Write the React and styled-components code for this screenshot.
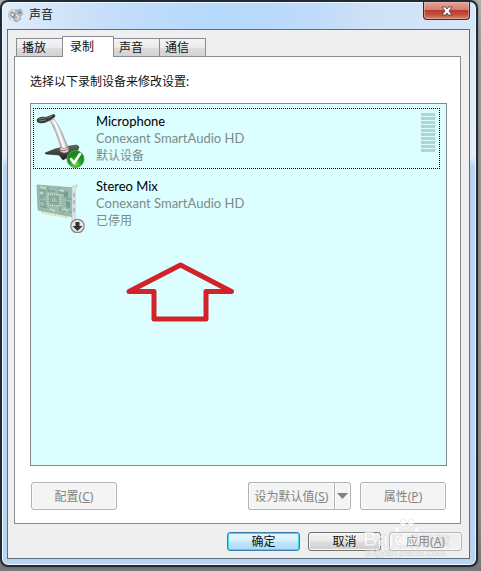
import React, { useState } from "react";
import styled, { createGlobalStyle, css } from "styled-components";

const GlobalStyle = createGlobalStyle`
  * { box-sizing: border-box; }
  body {
    margin: 0;
    background: linear-gradient(#b0b0b0, #969696 10%, #8c8c8c 90%, #777778);
    font-family: "Noto Sans", "Noto Sans CJK SC", sans-serif;
    font-size: 12px;
    line-height: 17px;
    color: #111;
  }
  button { font: inherit; color: inherit; margin: 0; padding: 0; }
`;

const Dialog = styled.main`
  display: flex;
  flex-direction: column;
  min-height: calc(100vh - 4px);
  margin: 0 3px 4px 0;
  padding: 0 6px 6px 5px;
  border: 2px solid #202c35;
  border-radius: 8px;
  background:
    linear-gradient(90deg, #e0edf9 0, #c5defa 22%, #b5d9fd 45%, #bedbfb 65%, #cfe1f6 78%, #d6e7f9 100%) top / 100% 28px no-repeat,
    linear-gradient(#dceaf8 0, #e4edf6 155px, #b9d3f0 165px, #b9d3f0 100%);
  box-shadow: inset 0 0 0 1px #edf7ff, 0 0 2px #555;
`;

const TitleBar = styled.header`
  display: flex;
  align-items: flex-start;
  height: 27px;
  flex: none;
`;

const Title = styled.h1`
  display: flex;
  align-items: center;
  gap: 5px;
  flex: 1;
  margin: 0;
  padding: 0 0 0 1px;
  height: 25px;
  font-size: 12px;
  font-weight: 400;
`;

const CloseButton = styled.button`
  display: grid;
  place-items: center;
  width: 47px;
  height: 18px;
  border: 1px solid #4f2326;
  border-top: 0;
  border-radius: 0 0 4px 4px;
  background: linear-gradient(#e3a79b 0, #d28072 45%, #b93b2b 50%, #c5503c 75%, #dc8a72);
  box-shadow: inset 0 0 0 1px #f0beb380;
`;

const Client = styled.div`
  display: flex;
  flex-direction: column;
  flex: 1;
  padding: 6px 7px 7px 6px;
  border: 1px solid #5c6e7e;
  background: #efefef;
`;

const TabList = styled.div`
  display: flex;
  align-items: flex-end;
  padding-left: 2px;
  height: 20px;
`;

const Tab = styled.button`
  height: 18px;
  width: 47px;
  padding: 1px 0 0 5px;
  text-align: left;
  line-height: 16px;
  border: 1px solid #898c95;
  border-bottom: 0;
  background: linear-gradient(#f4f4f4, #ebebeb 50%, #dcdcdc 55%, #d2d2d2);
  & + & { margin-left: -1px; }
  ${(p) => p.$active && css`
    position: relative;
    z-index: 1;
    width: 52px;
    height: 21px;
    margin-bottom: -1px;
    padding: 0 0 1px 7px;
    background: #fff;
  `}
`;

const Page = styled.section`
  display: flex;
  flex-direction: column;
  flex: 1;
  margin-right: 1px;
  padding: 16px 13px 13px 15px;
  border: 1px solid #898c95;
  background: #fff;
`;

const Prompt = styled.p`
  margin: 0 0 12px;
  line-height: 18px;
`;

const DeviceArea = styled.div`
  position: relative;
  flex: 1;
  padding: 4px 6px 4px 2px;
  border: 1px solid #828790;
  background: #dcfefe;
`;

const Devices = styled.ul`
  display: grid;
  gap: 4px;
  margin: 0;
  padding: 0;
  list-style: none;
`;

const Device = styled.li`
  display: flex;
  min-height: 61px;
  padding: 4px 4px 0 2px;
  border: 1px dotted ${(p) => (p.$selected ? "#000" : "transparent")};
`;

const DeviceIcon = styled.svg`
  flex: none;
  width: 50px;
  height: 55px;
  margin-right: 10px;
`;

const DeviceText = styled.div`
  flex: 1;
  color: #7d8b8b;
`;

const DeviceName = styled.div`
  font-family: Lato, "Noto Sans CJK SC", sans-serif;
  font-size: 13px;
  color: #000;
`;

const DeviceMaker = styled.div`
  font-family: Lato, "Noto Sans CJK SC", sans-serif;
  font-size: 13px;
`;

const Meter = styled.div`
  display: grid;
  align-content: start;
  gap: 1px;
  width: 14px;
`;

const MeterBar = styled.span`
  height: 3px;
  background: #a9d6d9;
`;

const ArrowMark = styled.svg`
  position: absolute;
  left: 94px;
  top: 157px;
  width: 112px;
  height: 64px;
`;

const Actions = styled.div`
  display: flex;
  gap: 9px;
  margin: 16px 1px 0 1px;
`;

const ActionButton = styled.button`
  display: flex;
  align-items: center;
  justify-content: center;
  width: 86px;
  height: 28px;
  border: 1px solid #adb2b5;
  border-radius: 3px;
  background: #f4f4f4;
  color: #838383;
  box-shadow: inset 0 0 0 1px #fcfcfc;
  ${(p) => p.$first && css`margin-right: auto;`}
  ${(p) => p.$split && css`
    border-right: 0;
    border-radius: 3px 0 0 3px;
  `}
  ${(p) => p.$drop && css`
    width: 17px;
    border-radius: 0 3px 3px 0;
  `}
`;

const SplitButton = styled.div`
  display: flex;
`;

const Footer = styled.footer`
  position: relative;
  display: flex;
  justify-content: flex-end;
  gap: 8px;
  margin-top: 8px;
`;

const FooterButton = styled.button`
  width: 73px;
  height: 19px;
  line-height: 17px;
  border: 1px solid #707070;
  border-radius: 3px;
  background: linear-gradient(#f3f3f3, #ebebeb 48%, #dddddd 52%, #cfcfcf);
  box-shadow: inset 0 0 0 1px #fafafa;
  ${(p) => p.$primary && css`
    border-color: #3c7fb1;
    background: linear-gradient(#e8f6fd, #d6effb 48%, #bee6f9 52%, #a9dbf3);
    box-shadow: inset 0 0 0 1px #48d2f2;
  `}
  &:disabled {
    position: relative;
    z-index: 1;
    border-color: #b3b7ba;
    background: transparent;
    color: #8b8b8b;
  }
`;

const Watermark = styled.svg`
  position: absolute;
  right: 7px;
  top: -16px;
  width: 92px;
  height: 46px;
  pointer-events: none;
  font-family: "Liberation Sans", "Noto Sans CJK SC", sans-serif;
`;

const DEVICES = [
  { name: "Microphone", maker: "Conexant SmartAudio HD", status: "默认设备", icon: "mic" },
  { name: "Stereo Mix", maker: "Conexant SmartAudio HD", status: "已停用", icon: "card" },
];

function SpeakerIcon() {
  return (
    <svg width="16" height="16" viewBox="0 0 16 16" aria-hidden="true">
      <circle cx="6" cy="8" r="6" fill="#b3babd" />
      <path d="M1 6 6 2l3 4-2 7-4 1Z" fill="#e1e5e7" />
      <ellipse cx="5" cy="8" rx="2.6" ry="3.6" fill="#8b9498" transform="rotate(-25 5 8)" />
      <ellipse cx="4.5" cy="7.5" rx="1.2" ry="1.8" fill="#dfe3e5" />
      <path d="m8 3 5-1 2 5-3 3 1 2-4 3-3-1 1-5Z" fill="#b3babd" stroke="#9aa2a6" strokeWidth=".6" />
      <circle cx="11.500" cy="5.500" r="1.500" fill="#858d91" />
      <path d="m8 8 3 2-2 3" fill="none" stroke="#f3f5f6" />
    </svg>
  );
}

function MicIcon() {
  return (
    <DeviceIcon viewBox="0 0 50 55" aria-hidden="true">
      <defs>
        <linearGradient id="arm" gradientUnits="userSpaceOnUse" x1="17" y1="24" x2="28" y2="20">
          <stop stopColor="#8a8a8a" /><stop offset=".35" stopColor="#d8d8d8" /><stop offset=".6" stopColor="#fff" /><stop offset="1" stopColor="#8a8a8a" />
        </linearGradient>
        <linearGradient id="base" x2="0" y2="1"><stop stopColor="#6a6a6a" /><stop offset="1" stopColor="#1a1a1a" /></linearGradient>
        <radialGradient id="ok" cy=".8"><stop stopColor="#7ce048" /><stop offset=".6" stopColor="#2aa528" /><stop offset="1" stopColor="#1a8a1d" /></radialGradient>
      </defs>
      <path d="m9 40 10-4 9-2 13-2 2 2-3 7-4 1-9 5-4-5-13-1Z" fill="url(#base)" stroke="#2a2a2a" strokeWidth=".6" />
      <path d="m14 7 4-1q5 7 8 14l6 14q-3 4-7 1l-5-15Z" fill="url(#arm)" stroke="#8d8d8d" strokeWidth=".6" />
      <path d="m17 11 4 9 5 14" fill="none" stroke="#999" strokeWidth=".6" />
      <path d="M24 34q4 3 8 0l1 4q-5 4-9 0Z" fill="#d8d8d8" stroke="#777" strokeWidth=".6" />
      <path d="M24 37q4 2 8-1" fill="none" stroke="#b04a4a" strokeWidth=".8" />
      <path d="M1 6Q4 3 10 4l8-3q2 1 1 3l-6 4q-5 3-10 2-3-1-2-4Z" fill="#3a3a3a" />
      <path d="m3 6 7-1M3 8l7-1M11 5l5-2" stroke="#8c8c8c" strokeWidth=".8" />
      <circle cx="39.500" cy="46" r="8.500" fill="url(#ok)" stroke="#4aa344" />
      <path d="m35 46 3 4 6-9" fill="none" stroke="#fff" strokeWidth="2.600" strokeLinecap="round" strokeLinejoin="round" />
    </DeviceIcon>
  );
}

function CardIcon() {
  return (
    <DeviceIcon viewBox="0 0 50 55" aria-hidden="true">
      <path d="m5 31 15 3v4L6 35Zm17 4 9 2v3l-9-2Z" fill="#dfe3b4" stroke="#c3caa0" strokeWidth=".5" />
      <path d="M8 32v4m3-4v4m3-3v4m3-3v4m8-2v3m3-2v3" stroke="#f4f3d6" />
      <path d="m1 7 37 3v29L2 32Z" fill="#9abbad" stroke="#84a599" strokeWidth=".7" />
      <path d="m3 12 6 1v5H4m0 5h5v7M12 9v4h7m4-3v5h9m-2 6h6m-6 5h5m-9 9 7-6M4 28l7 2M3 20h4m17 14v-5m9 5h3" fill="none" stroke="#72968a" strokeWidth="1" />
      <path d="m4 9 6 1m13 2 5 1M4 15h3m21 3h4m-5 13 5 1M14 31l5 2" stroke="#c8ddd0" strokeWidth="1.500" />
      <path d="m12 16 12 1v11l-12-1Z" fill="#8aab9f" stroke="#e0ead7" strokeWidth="1.200" strokeDasharray="1 1" />
      <path d="m15 19 6 1v5l-6-1Z" fill="#a7b8b2" stroke="#7c958b" strokeWidth=".5" />
      <path d="m28 13 4 1v6l-4-1Zm2 10 4 1v6l-4-1Z" fill="#789c8e" />
      <path d="m36 9 5-2v2l-2 2v32l-3 2Z" fill="#e4ebeb" stroke="#b3bbbb" strokeWidth=".7" />
      <path d="M38 15v4m0 3v4m0 4v4" stroke="#9aa5a5" strokeWidth="1.200" />
      <circle cx="41.500" cy="48" r="6.700" fill="#e6e6e6" stroke="#858585" strokeWidth="1.200" />
      <path d="M39.500 44h4v4h3l-5 5-5-5h3Z" fill="#333" />
    </DeviceIcon>
  );
}

function PawMark() {
  return (
    <Watermark viewBox="0 0 92 46" aria-hidden="true">
      <g fill="#fff" fillOpacity=".7" stroke="#b8b8b8" strokeOpacity=".5" strokeWidth=".5">
        <ellipse cx="34" cy="14" rx="3" ry="4" />
        <ellipse cx="40" cy="7" rx="3" ry="4" />
        <ellipse cx="48" cy="7" rx="3" ry="4" />
        <ellipse cx="54" cy="14" rx="3" ry="4" />
        <path d="M44 15c4 0 5 4 8 7 4 4 2 9-3 9l-5-1-5 1c-5 0-7-5-3-9 3-3 4-7 8-7Z" />
        <text x="0" y="30" fontSize="20" fontWeight="700">Baidu</text>
        <text x="57" y="29" fontSize="15">经验</text>
        <text x="2" y="40" fontSize="10">jingyan.baidu.com</text>
      </g>
    </Watermark>
  );
}

export default function App() {
  const [tab, setTab] = useState(1);
  return (
    <>
      <GlobalStyle />
      <Dialog>
        <TitleBar>
          <Title><SpeakerIcon />声音</Title>
          <CloseButton aria-label="关闭">
            <svg width="12" height="10" viewBox="0 0 12 10" aria-hidden="true">
              <path d="M1 1h3.500L6 3l1.500-2H11L8 5l3 4H7.500L6 7 4.500 9H1l3-4Z" fill="#fff" stroke="#5a3333" strokeWidth=".8" />
            </svg>
          </CloseButton>
        </TitleBar>
        <Client>
          <TabList role="tablist">
            {["播放", "录制", "声音", "通信"].map((label, i) => (
              <Tab key={label} role="tab" aria-selected={tab === i} $active={tab === i} onClick={() => setTab(i)}>{label}</Tab>
            ))}
          </TabList>
          <Page role="tabpanel">
            <Prompt>选择以下录制设备来修改设置:</Prompt>
            <DeviceArea>
              <Devices>
                {DEVICES.map((d, i) => (
                  <Device key={d.name} $selected={i === 0}>
                    {d.icon === "mic" ? <MicIcon /> : <CardIcon />}
                    <DeviceText>
                      <DeviceName>{d.name}</DeviceName>
                      <DeviceMaker>{d.maker}</DeviceMaker>
                      <div>{d.status}</div>
                    </DeviceText>
                    {i === 0 && <Meter>{Array.from({ length: 10 }, (_, n) => <MeterBar key={n} />)}</Meter>}
                  </Device>
                ))}
              </Devices>
              <ArrowMark viewBox="0 0 112 64" aria-hidden="true">
                <path d="m55.500 4 51 26.500H81V58H29V30.500H4Z" fill="none" stroke="#d2232a" strokeWidth="5" strokeLinejoin="round" />
              </ArrowMark>
            </DeviceArea>
            <Actions>
              <ActionButton disabled $first>配置(<u>C</u>)</ActionButton>
              <SplitButton>
                <ActionButton disabled $split>设为默认值(<u>S</u>)</ActionButton>
                <ActionButton disabled $drop aria-label="更多">
                  <svg width="11" height="6" viewBox="0 0 11 6" aria-hidden="true"><path d="M0 0h11L5.500 6Z" fill="#838383" /></svg>
                </ActionButton>
              </SplitButton>
              <ActionButton disabled>属性(<u>P</u>)</ActionButton>
            </Actions>
          </Page>
          <Footer>
            <FooterButton $primary>确定</FooterButton>
            <FooterButton>取消</FooterButton>
            <FooterButton disabled>应用(<u>A</u>)</FooterButton>
            <PawMark />
          </Footer>
        </Client>
      </Dialog>
    </>
  );
}
